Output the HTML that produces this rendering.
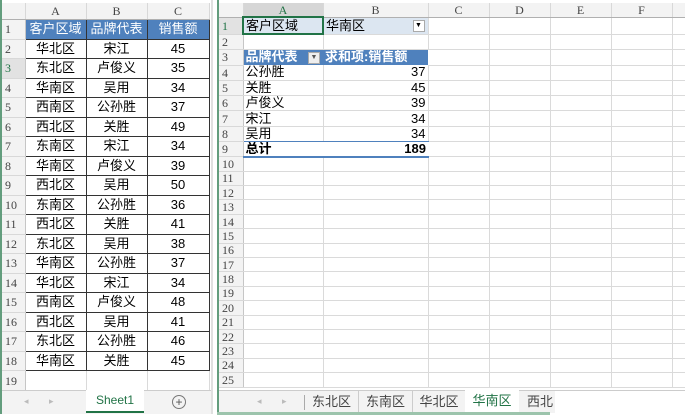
<!DOCTYPE html>
<html><head><meta charset="utf-8">
<style>
body{margin:0;width:685px;height:417px;background:#fff;position:relative;overflow:hidden;font-family:"Liberation Sans","Noto Sans CJK SC",sans-serif;}
.a{position:absolute;}
table{border-collapse:collapse;table-layout:fixed;position:absolute;}
td{padding:0;overflow:hidden;white-space:nowrap;font-size:13px;line-height:12px;color:#000;}
.rh{background:#f3f3f3;color:#444;font-family:"Liberation Serif",serif;font-size:12px;text-align:left;padding-left:3px;border-bottom:1px solid #d8d8d8;border-right:1px solid #c6c6c6;}
.ch{background:#f3f3f3;color:#444;font-family:"Liberation Serif",serif;font-size:12px;text-align:center;border-right:1px solid #d8d8d8;border-bottom:1px solid #b0b0b0;}
.g{border-right:1px solid #dadada;border-bottom:1px solid #dadada;}
#L td.d{border:1px solid #333;text-align:center;}
#L td.h{background:#4f81bd;color:#fff;text-align:center;border:1px solid #333;}
.tab{position:absolute;top:0;height:22px;line-height:22px;font-size:13px;color:#444;text-align:center;}
</style></head><body>
<!-- left window -->
<div class="a" style="left:0;top:0;width:2px;height:414px;background:#217346;opacity:.7"></div>
<div class="a" style="left:211px;top:0;width:2px;height:414px;background:#e0e0e0"></div>
<table id="L" style="left:2px;top:3px;width:207px">
<colgroup><col style="width:23px"><col style="width:61px"><col style="width:61px"><col style="width:62px"></colgroup>
<tr style="height:16px"><td class="ch" style="background:#f3f3f3"></td><td class="ch">A</td><td class="ch">B</td><td class="ch">C</td></tr>
<tr style="height:20px"><td class="rh">1</td><td class="h">客户区域</td><td class="h">品牌代表</td><td class="h">销售额</td></tr>
<tr style="height:19.5px"><td class="rh">2</td><td class="d">华北区</td><td class="d">宋江</td><td class="d">45</td></tr>
<tr style="height:19.5px"><td class="rh" style="color:#217346;background:#e2e2e2">3</td><td class="d">东北区</td><td class="d">卢俊义</td><td class="d">35</td></tr>
<tr style="height:19.5px"><td class="rh">4</td><td class="d">华南区</td><td class="d">吴用</td><td class="d">34</td></tr>
<tr style="height:19.5px"><td class="rh">5</td><td class="d">西南区</td><td class="d">公孙胜</td><td class="d">37</td></tr>
<tr style="height:19.5px"><td class="rh">6</td><td class="d">西北区</td><td class="d">关胜</td><td class="d">49</td></tr>
<tr style="height:19.5px"><td class="rh">7</td><td class="d">东南区</td><td class="d">宋江</td><td class="d">34</td></tr>
<tr style="height:19.5px"><td class="rh">8</td><td class="d">华南区</td><td class="d">卢俊义</td><td class="d">39</td></tr>
<tr style="height:19.5px"><td class="rh">9</td><td class="d">西北区</td><td class="d">吴用</td><td class="d">50</td></tr>
<tr style="height:19.5px"><td class="rh">10</td><td class="d">东南区</td><td class="d">公孙胜</td><td class="d">36</td></tr>
<tr style="height:19.5px"><td class="rh">11</td><td class="d">西北区</td><td class="d">关胜</td><td class="d">41</td></tr>
<tr style="height:19.5px"><td class="rh">12</td><td class="d">东北区</td><td class="d">吴用</td><td class="d">38</td></tr>
<tr style="height:19.5px"><td class="rh">13</td><td class="d">华南区</td><td class="d">公孙胜</td><td class="d">37</td></tr>
<tr style="height:19.5px"><td class="rh">14</td><td class="d">华北区</td><td class="d">宋江</td><td class="d">34</td></tr>
<tr style="height:19.5px"><td class="rh">15</td><td class="d">西南区</td><td class="d">卢俊义</td><td class="d">48</td></tr>
<tr style="height:19.5px"><td class="rh">16</td><td class="d">西北区</td><td class="d">吴用</td><td class="d">41</td></tr>
<tr style="height:19.5px"><td class="rh">17</td><td class="d">东北区</td><td class="d">公孙胜</td><td class="d">46</td></tr>
<tr style="height:19.5px"><td class="rh">18</td><td class="d">华南区</td><td class="d">关胜</td><td class="d">45</td></tr>
<tr style="height:20px"><td class="rh">19</td><td class="g"></td><td class="g"></td><td class="g"></td></tr>
</table>
<div class="a" style="left:2px;top:390px;width:209px;height:23px;background:#f3f3f3;border-top:1px solid #ccc">
 <div class="a" style="left:22px;top:5px;font-size:9px;color:#bbb">◂</div>
 <div class="a" style="left:47px;top:5px;font-size:9px;color:#bbb">▸</div>
 <div class="a" style="left:84px;top:-1px;width:58px;height:21px;background:#fff;border-bottom:2px solid #217346;color:#217346;font-size:12px;line-height:20px;text-align:center">Sheet1</div>
 <div class="a" style="left:170px;top:4px;width:12px;height:12px;border:1px solid #777;border-radius:50%;font-size:12px;line-height:12px;text-align:center;color:#555">+</div>
</div>
<!-- right window -->
<div class="a" style="left:217px;top:0;width:2px;height:415px;background:#217346;opacity:.7"></div>
<table id="R" style="left:219px;top:3px;width:470px">
<colgroup><col style="width:24px"><col style="width:80px"><col style="width:105px"><col style="width:61px"><col style="width:61px"><col style="width:61px"><col style="width:61px"><col style="width:17px"></colgroup>
<tr style="height:14px"><td class="ch"></td><td class="ch" style="background:#d6d6d6;color:#217346;border-bottom:2px solid #217346">A</td><td class="ch">B</td><td class="ch">C</td><td class="ch">D</td><td class="ch">E</td><td class="ch">F</td><td class="ch" style="border-right:0"></td></tr>
<tr style="height:17px"><td class="rh" style="color:#217346;background:#e2e2e2">1</td><td style="background:#dce6f1;border:2px solid #217346;padding-left:2px">客户区域</td><td style="background:#dce6f1;padding-left:2px;position:relative" class="g">华南区<span style="position:absolute;right:3px;top:2px;width:10px;height:10px;border:1px solid #aaa;background:#fff;font-size:7px;line-height:10px;text-align:center">▼</span></td><td class="g"></td><td class="g"></td><td class="g"></td><td class="g"></td><td class="g"></td></tr>
<tr style="height:15px"><td class="rh">2</td><td class="g"></td><td class="g"></td><td class="g"></td><td class="g"></td><td class="g"></td><td class="g"></td><td class="g"></td></tr>
<tr style="height:16px"><td class="rh">3</td><td style="background:#4f81bd;color:#fff;font-weight:bold;padding-left:2px;position:relative">品牌代表<span style="position:absolute;right:3px;top:2px;width:10px;height:10px;border:1px solid #aaa;background:#eee;color:#555;font-size:7px;line-height:10px;text-align:center">▼</span></td><td style="background:#4f81bd;color:#fff;font-weight:bold;padding-left:2px">求和项:销售额</td><td class="g"></td><td class="g"></td><td class="g"></td><td class="g"></td><td class="g"></td></tr>
<tr style="height:15.3px"><td class="rh">4</td><td class="g" style="padding-left:2px">公孙胜</td><td class="g" style="text-align:right;padding-right:2px">37</td><td class="g"></td><td class="g"></td><td class="g"></td><td class="g"></td><td class="g"></td></tr>
<tr style="height:15.3px"><td class="rh">5</td><td class="g" style="padding-left:2px">关胜</td><td class="g" style="text-align:right;padding-right:2px">45</td><td class="g"></td><td class="g"></td><td class="g"></td><td class="g"></td><td class="g"></td></tr>
<tr style="height:15.3px"><td class="rh">6</td><td class="g" style="padding-left:2px">卢俊义</td><td class="g" style="text-align:right;padding-right:2px">39</td><td class="g"></td><td class="g"></td><td class="g"></td><td class="g"></td><td class="g"></td></tr>
<tr style="height:15.3px"><td class="rh">7</td><td class="g" style="padding-left:2px">宋江</td><td class="g" style="text-align:right;padding-right:2px">34</td><td class="g"></td><td class="g"></td><td class="g"></td><td class="g"></td><td class="g"></td></tr>
<tr style="height:15.3px"><td class="rh">8</td><td class="g" style="padding-left:2px;border-bottom:1px solid #4f81bd">吴用</td><td class="g" style="text-align:right;padding-right:2px;border-bottom:1px solid #4f81bd">34</td><td class="g"></td><td class="g"></td><td class="g"></td><td class="g"></td><td class="g"></td></tr>
<tr style="height:15.3px"><td class="rh">9</td><td style="padding-left:2px;font-weight:bold;border-bottom:2px solid #4f81bd">总计</td><td style="text-align:right;padding-right:2px;font-weight:bold;border-bottom:2px solid #4f81bd">189</td><td class="g"></td><td class="g"></td><td class="g"></td><td class="g"></td><td class="g"></td></tr>
<tr style="height:14.4px"><td class="rh">10</td><td class="g"></td><td class="g"></td><td class="g"></td><td class="g"></td><td class="g"></td><td class="g"></td><td class="g"></td></tr>
<tr style="height:14.4px"><td class="rh">11</td><td class="g"></td><td class="g"></td><td class="g"></td><td class="g"></td><td class="g"></td><td class="g"></td><td class="g"></td></tr>
<tr style="height:14.4px"><td class="rh">12</td><td class="g"></td><td class="g"></td><td class="g"></td><td class="g"></td><td class="g"></td><td class="g"></td><td class="g"></td></tr>
<tr style="height:14.4px"><td class="rh">13</td><td class="g"></td><td class="g"></td><td class="g"></td><td class="g"></td><td class="g"></td><td class="g"></td><td class="g"></td></tr>
<tr style="height:14.4px"><td class="rh">14</td><td class="g"></td><td class="g"></td><td class="g"></td><td class="g"></td><td class="g"></td><td class="g"></td><td class="g"></td></tr>
<tr style="height:14.4px"><td class="rh">15</td><td class="g"></td><td class="g"></td><td class="g"></td><td class="g"></td><td class="g"></td><td class="g"></td><td class="g"></td></tr>
<tr style="height:14.4px"><td class="rh">16</td><td class="g"></td><td class="g"></td><td class="g"></td><td class="g"></td><td class="g"></td><td class="g"></td><td class="g"></td></tr>
<tr style="height:14.4px"><td class="rh">17</td><td class="g"></td><td class="g"></td><td class="g"></td><td class="g"></td><td class="g"></td><td class="g"></td><td class="g"></td></tr>
<tr style="height:14.4px"><td class="rh">18</td><td class="g"></td><td class="g"></td><td class="g"></td><td class="g"></td><td class="g"></td><td class="g"></td><td class="g"></td></tr>
<tr style="height:14.4px"><td class="rh">19</td><td class="g"></td><td class="g"></td><td class="g"></td><td class="g"></td><td class="g"></td><td class="g"></td><td class="g"></td></tr>
<tr style="height:14.4px"><td class="rh">20</td><td class="g"></td><td class="g"></td><td class="g"></td><td class="g"></td><td class="g"></td><td class="g"></td><td class="g"></td></tr>
<tr style="height:14.4px"><td class="rh">21</td><td class="g"></td><td class="g"></td><td class="g"></td><td class="g"></td><td class="g"></td><td class="g"></td><td class="g"></td></tr>
<tr style="height:14.4px"><td class="rh">22</td><td class="g"></td><td class="g"></td><td class="g"></td><td class="g"></td><td class="g"></td><td class="g"></td><td class="g"></td></tr>
<tr style="height:14.4px"><td class="rh">23</td><td class="g"></td><td class="g"></td><td class="g"></td><td class="g"></td><td class="g"></td><td class="g"></td><td class="g"></td></tr>
<tr style="height:14.4px"><td class="rh">24</td><td class="g"></td><td class="g"></td><td class="g"></td><td class="g"></td><td class="g"></td><td class="g"></td><td class="g"></td></tr>
<tr style="height:14.4px"><td class="rh">25</td><td class="g"></td><td class="g"></td><td class="g"></td><td class="g"></td><td class="g"></td><td class="g"></td><td class="g"></td></tr>
</table>
<div class="a" style="left:219px;top:390px;width:466px;height:22px;background:#f3f3f3;border-top:1px solid #ccc">
 <div class="a" style="left:38px;top:5px;font-size:9px;color:#bbb">◂</div>
 <div class="a" style="left:63px;top:5px;font-size:9px;color:#bbb">▸</div>
 <div class="a" style="left:85px;top:4px;width:1px;height:15px;background:#aaa"></div>
 <div class="tab" style="left:86px;width:53px;border-right:1px solid #ccc">东北区</div>
 <div class="tab" style="left:140px;width:53px;border-right:1px solid #ccc">东南区</div>
 <div class="tab" style="left:194px;width:52px">华北区</div>
 <div class="tab" style="left:246px;width:54px;top:-1px;background:#fff;color:#217346;border-bottom:2px solid #217346">华南区</div>
 <div class="tab" style="left:302px;width:28px;overflow:hidden;text-align:left;padding-left:6px">西北区</div>
 <div class="a" style="left:336px;top:0;width:130px;height:23px;background:#fff"></div>
</div>
<div class="a" style="left:217px;top:412px;width:333px;height:3px;background:#9cc4ac"></div>
<div class="a" style="left:0;top:415px;width:685px;height:2px;background:#fff"></div>
</body></html>
